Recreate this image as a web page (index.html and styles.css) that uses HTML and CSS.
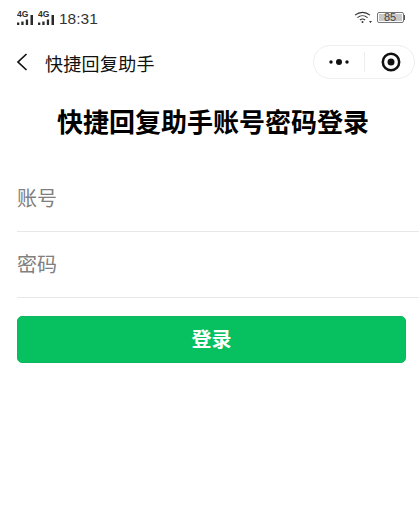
FILE: index.html
```html
<!DOCTYPE html>
<html lang="zh">
<head>
<meta charset="utf-8">
<title>快捷回复助手</title>
<link rel="stylesheet" href="styles.css">
</head>
<body>
<div class="status">
  <div class="status-left">
    <svg class="sig" width="17" height="15" viewBox="0 0 17 15"><text class="sig-label" x="0" y="7">4G</text><path d="M0 12.500h2.300V15H0zM4.300 11.500h2.300V15H4.300zM8.800 9.500h2.300V15H8.800zM13.500 5h2.500v10h-2.500z" fill="#2a2a2a"/></svg>
    <svg class="sig" width="17" height="15" viewBox="0 0 17 15"><text class="sig-label" x="0" y="7">4G</text><path d="M0 12.500h2.300V15H0zM4.300 11.500h2.300V15H4.300zM8.800 9.500h2.300V15H8.800zM13.500 5h2.500v10h-2.500z" fill="#2a2a2a"/></svg>
    <span class="time">18:31</span>
  </div>
  <div class="status-right">
    <svg class="wifi" width="19" height="13" viewBox="0 0 19 13" fill="none" stroke="#333" stroke-width="1.100">
      <path d="M1 4.200C5.500 .4 11.500 .4 16 4.200"/><path d="M3.400 6.600c3-2.500 7.200-2.500 10.200 0"/><path d="M5.900 9c1.600-1.200 3.600-1.200 5.200 0"/>
      <circle cx="8.500" cy="11" r="1" fill="#333" stroke="none"/><path d="M15 10h3l-1.500 2z" fill="#333" stroke="none"/>
    </svg>
    <span class="battery"><span class="battery-level">85</span></span><span class="battery-tip"></span>
  </div>
</div>
<header class="nav">
  <svg class="back" width="12" height="18" viewBox="0 0 12 18" fill="none" stroke="#111" stroke-width="1.700"><path d="M10.500 1 2 9l8.500 8"/></svg>
  <span class="nav-title">快捷回复助手</span>
  <div class="capsule">
    <span class="capsule-part">
      <svg width="22" height="8" viewBox="0 0 22 8" fill="#111"><circle cx="3" cy="4" r="1.700"/><circle cx="11" cy="4" r="3"/><circle cx="19" cy="4" r="1.700"/></svg>
    </span>
    <span class="capsule-sep"></span>
    <span class="capsule-part">
      <svg class="target" width="20" height="20" viewBox="0 0 20 20"><circle cx="10" cy="10" r="8.200" fill="none" stroke="#111" stroke-width="2.500"/><circle cx="10" cy="10" r="3.500" fill="#111"/></svg>
    </span>
  </div>
</header>
<main class="page">
  <h1 class="heading">快捷回复助手账号密码登录</h1>
  <div class="field"><span class="placeholder">账号</span></div>
  <div class="field"><span class="placeholder">密码</span></div>
  <button class="login" type="button">登录</button>
</main>
</body>
</html>
```
FILE: styles.css
```css
* { box-sizing: border-box; }
html, body { margin: 0; padding: 0; }
body {
  width: 419px;
  height: 506px;
  overflow: hidden;
  background: #fff;
  color: #000;
  font-family: "Liberation Sans", "Noto Sans CJK SC", sans-serif;
}
.status {
  height: 37px;
  padding: 9px 14px 0 17px;
  display: flex;
  justify-content: space-between;
  align-items: flex-start;
}
.status-left { display: flex; align-items: flex-start; gap: 4px; }
.sig { display: block; margin-top: 1px; }
.sig-label { font-size: 8.500px; font-weight: 700; fill: #2a2a2a; }
.time { font-size: 15.500px; line-height: 19px; color: #333; }
.status-right { display: flex; align-items: center; padding-top: 2px; }
.wifi { margin-right: 4px; }
.battery {
  width: 27px;
  height: 11px;
  border: 1px solid #777;
  border-radius: 2px;
  padding: 1px;
  display: flex;
}
.battery-level {
  flex: 1;
  background: #c8c8c8;
  font-size: 11px;
  line-height: 7px;
  text-align: center;
  color: #444;
}
.battery-tip { width: 1.500px; height: 5px; background: #555; }
.nav {
  height: 50px;
  display: flex;
  align-items: center;
  padding: 0 4px 0 16px;
}
.back { display: block; }
.nav-title { margin: 1px 0 0 17px; font-size: 18px; letter-spacing: .3px; color: #111; }
.capsule {
  margin-left: auto;
  width: 102px;
  height: 34px;
  border: 1px solid #eee;
  border-radius: 17px;
  display: flex;
  align-items: center;
  background: #fff;
}
.capsule-part { flex: 1; display: flex; justify-content: center; align-items: center; }
.target { margin-left: 4px; }
.capsule-sep { width: 1px; height: 20px; background: #eee; }
.page { padding: 0 0 0 17px; }
.heading {
  margin: 18px 0 0;
  padding: 0 0 0 40px;
  height: 45px;
  font-size: 26px;
  line-height: 37px;
  font-weight: 700;
  white-space: nowrap;
}
.field {
  height: 66px;
  border-bottom: 1px solid #e8e8e8;
  display: flex;
  align-items: center;
  padding-bottom: 3px;
}
.field:first-of-type { margin-top: 17px; height: 65px; }
.placeholder { font-size: 20px; color: #808080; }
.login {
  display: block;
  margin-top: 18px;
  padding: 0 0 3px;
  width: 389px;
  height: 47px;
  border: 1px solid #0fb55f;
  border-radius: 5px;
  background: #07c160;
  color: #fff;
  font: 700 20px "Liberation Sans", "Noto Sans CJK SC", sans-serif;
}
```
